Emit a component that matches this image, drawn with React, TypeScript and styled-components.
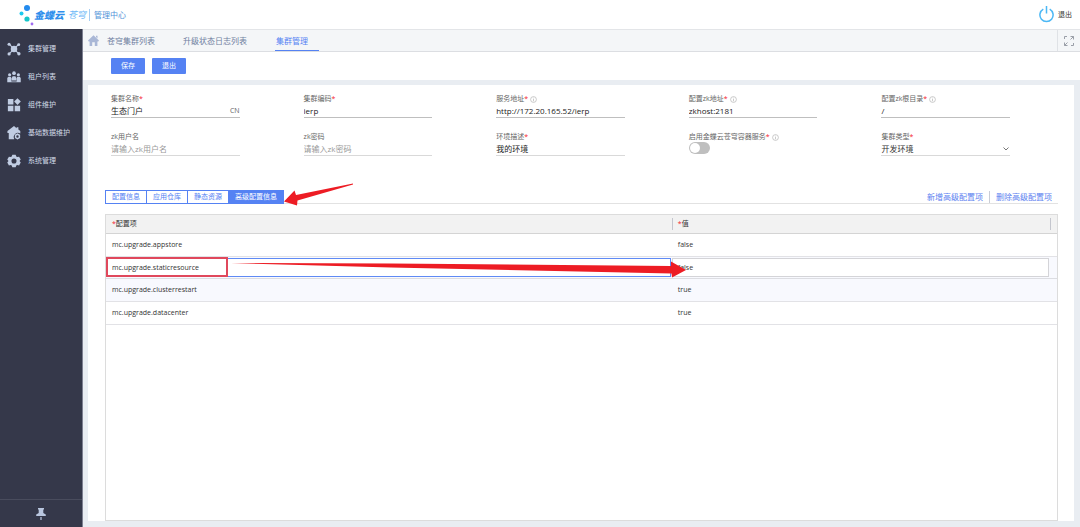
import React from "react";
import styled, { createGlobalStyle } from "styled-components";

const GlobalStyle = createGlobalStyle`
  *, *::before, *::after { box-sizing: border-box; }
  body { margin: 0; background: #e9edf2; }
  body, button, input, select {
    font-family: "Open Sans", "Noto Sans CJK SC", sans-serif;
    font-size: 8px;
    line-height: 12px;
  }
  button, input, select { margin: 0; padding: 0; border: 0; background: none; color: inherit; outline: none; }
  a { color: inherit; text-decoration: none; }
`;

const Page = styled.div`
  display: flex;
  flex-direction: column;
  min-height: 100vh;
  color: #333;
`;

const Header = styled.header`
  display: flex;
  align-items: center;
  height: 29px;
  padding: 0 8px 0 18px;
  background: #fff;
`;

const Brand = styled.div`
  display: flex;
  align-items: center;
  flex: 1;
`;

const BrandName = styled.span`
  font-size: 10px;
  font-weight: 900;
  font-style: italic;
  color: #2f8fec;
`;

const BrandSub = styled.span`
  margin-left: 4px;
  font-size: 9px;
  font-style: italic;
  color: #6db8f7;
`;

const BrandArea = styled.span`
  margin-left: 3px;
  padding-left: 4px;
  border-left: 1px solid #a5cdf3;
  color: #4f92d8;
`;

const LogoutButton = styled.button`
  display: flex;
  align-items: center;
  gap: 4px;
  font-size: 7px;
`;

const Body = styled.div`
  display: flex;
  flex: 1;
`;

const Sidebar = styled.aside`
  display: flex;
  flex-direction: column;
  flex: none;
  width: 83px;
  background: #35384a;
  color: #d3dbe8;
  border-right: 1px solid #7d8091;
`;

const SideNav = styled.nav`
  display: flex;
  flex-direction: column;
  flex: 1;
  padding-top: 6px;
`;

const SideLink = styled.a`
  display: flex;
  align-items: center;
  gap: 7px;
  height: 28px;
  padding-left: 7px;
  font-size: 7px;
  svg { color: #c0cce2; }
`;

const PinButton = styled.button`
  display: flex;
  align-items: center;
  justify-content: center;
  height: 28px;
  border-top: 1px solid #494c5d;
  color: #b9c6df;
`;

const Main = styled.main`
  display: flex;
  flex-direction: column;
  flex: 1;
  min-width: 0;
`;

const TabBar = styled.div`
  display: flex;
  align-items: stretch;
  height: 23px;
  padding-left: 5px;
  background: #f4f6f8;
  border-top: 1px solid #e3e5e8;
  border-bottom: 1px solid #dcdee2;
  color: #6f80a0;
`;

const HomeLink = styled.a`
  display: flex;
  align-items: center;
  margin-right: 8px;
  color: #a9b7d6;
`;

const PageTab = styled.a<{ $active?: boolean }>`
  display: flex;
  align-items: center;
  margin-right: 27px;
  padding-top: 2px;
  padding-right: ${(p) => (p.$active ? 11 : 1)}px;
  padding-left: ${(p) => (p.$active ? 1 : 0)}px;
  border-bottom: 1px solid ${(p) => (p.$active ? "#5582f3" : "transparent")};
  color: ${(p) => (p.$active ? "#5582f3" : "inherit")};
`;

const ExpandButton = styled.button`
  display: flex;
  align-items: center;
  justify-content: center;
  width: 23px;
  margin-left: auto;
  border-left: 1px solid #dfe2e6;
  color: #9a9fa8;
`;

const Toolbar = styled.div`
  display: flex;
  gap: 7px;
  padding: 6px 28px;
  background: #fff;
`;

const PrimaryButton = styled.button`
  width: 34px;
  height: 16px;
  background: #5582f3;
  border-radius: 1px;
  color: #fff;
  font-size: 7px;
`;

const Card = styled.section`
  display: flex;
  flex-direction: column;
  flex: 1;
  margin: 5px 6px 6px 5px;
  background: #fff;
`;

const FieldGrid = styled.form`
  display: grid;
  grid-template-columns: repeat(5, 1fr);
  row-gap: 13px;
  padding: 9px 0 0 23px;
`;

const Field = styled.div`
  margin-right: 64px;
`;

const FieldLabel = styled.label`
  display: flex;
  align-items: center;
  height: 10px;
  font-size: 7px;
  line-height: 10px;
  color: #666;
  white-space: nowrap;
  svg { margin-left: 2px; color: #b5b5b5; }
`;

const Star = styled.span`
  color: #f5222d;
`;

const Control = styled.div<{ $strong?: boolean }>`
  display: flex;
  align-items: center;
  height: 14px;
  margin-bottom: 1px;
  border-bottom: 1px solid ${(p) => (p.$strong ? "#bfbfbf" : "#d9d9d9")};
  color: #666;
  font-size: 7px;
`;

const TextInput = styled.input`
  flex: 1;
  width: 100%;
  min-width: 0;
  color: #222;
  &::placeholder { color: #999; opacity: 1; }
`;

const SelectBox = styled.select`
  flex: 1;
  appearance: none;
  color: #333;
`;

const Switch = styled.input`
  display: flex;
  align-items: center;
  appearance: none;
  width: 21px;
  height: 12px;
  border-radius: 6px;
  background: #bfbfbf;
  &::before {
    content: "";
    width: 10px;
    height: 10px;
    margin-left: 1px;
    border-radius: 50%;
    background: #fff;
  }
`;

const ConfigBar = styled.div`
  display: flex;
  align-items: flex-end;
  justify-content: space-between;
  margin: 33px 16px 0 17px;
  border-bottom: 1px solid #e2e2e2;
`;

const Segments = styled.div`
  display: flex;
  margin-bottom: -1px;
  border: 1px solid #5582f3;
`;

const Segment = styled.button<{ $active?: boolean }>`
  height: 12px;
  padding: 0 6px;
  background: ${(p) => (p.$active ? "#5582f3" : "#fff")};
  color: ${(p) => (p.$active ? "#fff" : "#5582f3")};
  font-size: 7px;
  line-height: 12px;
  & + & { border-left: 1px solid #5582f3; }
`;

const Actions = styled.div`
  display: flex;
  color: #5c7ff0;
`;

const Action = styled.button`
  padding: 0 6px;
  & + & { border-left: 1px solid #c9cdd6; }
`;

const TableFrame = styled.div`
  position: relative;
  flex: 1;
  margin: 10px 16px 0 17px;
  border: 1px solid #dcdcdc;
`;

const Table = styled.table`
  width: 100%;
  border-collapse: separate;
  border-spacing: 0;
  table-layout: fixed;
  font-size: 7px;
  line-height: 10px;
`;

const HeadCell = styled.th<{ $width?: string }>`
  width: ${(p) => p.$width ?? "auto"};
  height: 19px;
  padding: 0 6px 0 0;
  background: #f2f2f2;
  border-bottom: 1px solid #d4d4d4;
  font-weight: 400;
  text-align: left;
`;

const HeadInner = styled.div<{ $rule?: boolean }>`
  display: flex;
  align-items: center;
  height: 12px;
  padding-left: 5px;
  border-left: 1px solid ${(p) => (p.$rule ? "#c4c6ce" : "transparent")};
  border-right: 1px solid ${(p) => (p.$rule ? "#c4c6ce" : "transparent")};
`;

const Row = styled.tr<{ $tint?: boolean }>`
  background: ${(p) => (p.$tint ? "#f8f9fe" : "#fff")};
`;

const Cell = styled.td`
  height: 23px;
  padding: 0 0 0 6px;
  border-bottom: 1px solid #e2e2e6;
`;

const EditCell = styled.td<{ $last?: boolean }>`
  height: 22px;
  padding: 0 ${(p) => (p.$last ? 8 : 1)}px 0 0;
  border-bottom: 1px solid #dcdde2;
`;

const CellInput = styled.input<{ $focus?: boolean }>`
  display: block;
  width: 100%;
  height: 19px;
  padding-left: 5px;
  background: #fff;
  border: 1px solid ${(p) => (p.$focus ? "#5f8af5" : "#d4d4d8")};
  font-size: 7px;
  line-height: 10px;
`;

const Highlight = styled.div`
  position: absolute;
  top: 42px;
  left: 0;
  width: 122px;
  height: 20px;
  border: 2px solid #e0485c;
  pointer-events: none;
`;

const Arrows = styled.svg`
  position: absolute;
  top: -32px;
  left: 0;
  pointer-events: none;
`;

const InfoIcon = () => (
  <svg width="7" height="7" viewBox="0 0 14 14" fill="none" stroke="currentColor" strokeWidth="1.4">
    <circle cx="7" cy="7" r="5.8" />
    <path d="M7 6v4.5M7 3.4v1.4" />
  </svg>
);

const icons: Record<string, React.ReactNode> = {
  cluster: (
    <>
      <path d="M3 3l10 10M13 3L3 13" stroke="currentColor" strokeWidth="1.3" />
      <circle cx="8" cy="8" r="3.7" />
      <circle cx="2.4" cy="2.6" r="1.8" />
      <circle cx="13.4" cy="3" r="1.7" />
      <circle cx="2.4" cy="13.6" r="1.8" />
      <circle cx="13.6" cy="13.4" r="1.9" />
    </>
  ),
  tenants: (
    <>
      <circle cx="3" cy="5.4" r="1.8" />
      <circle cx="8" cy="3.6" r="2.1" />
      <circle cx="13" cy="5.4" r="1.8" />
      <path d="M5.4 12V9l1-2h3.2l1 2v3zM.3 14V9.2l1.2-1.5h2.7L5 9v4h6V9l.8-1.3h2.7l1.2 1.5V14z" />
    </>
  ),
  parts: (
    <>
      <path d="M1 1h6.3v6.3H1zM1 8.8h6.3V15H1zM8.8 8.8H15V15H8.8z" />
      <path d="M12 .3l3.8 3.8L12 7.9 8.2 4.1z" />
    </>
  ),
  house: (
    <>
      <path d="M8 0L.5 5.8V8H2v7h6.4a4.8 4.8 0 0 1 6.800-6.400V5.800L13 4.100V1.500h-2v1z" />
      <path
        fillRule="evenodd"
        d="M12 8.400l3 1.700v3.600l-3 1.800-3-1.800v-3.600zm0 2.200a1.400 1.400 0 1 0 0 2.800 1.400 1.400 0 0 0 0-2.800z"
      />
    </>
  ),
  gear: (
    <path
      fillRule="evenodd"
      d="M6.100.800h3.800l.700 2 1.100.600 2.100-.400 1.900 3.300L14.300 8l1.400 1.700-1.900 3.300-2.100-.400-1.100.600-.700 2H6.100l-.700-2-1.100-.600-2.100.400-1.900-3.300L1.700 8 .300 6.300 2.200 3l2.100.400 1.100-.600zM8 5.100a2.900 2.900 0 1 0 0 5.800 2.900 2.900 0 0 0 0-5.800z"
    />
  ),
};

const menu = [
  { icon: "cluster", text: "集群管理" },
  { icon: "tenants", text: "租户列表" },
  { icon: "parts", text: "组件维护" },
  { icon: "house", text: "基础数据维护" },
  { icon: "gear", text: "系统管理" },
];

type FieldSpec = {
  id: string;
  label: string;
  required?: boolean;
  info?: boolean;
  value?: string;
  placeholder?: string;
  suffix?: string;
  kind?: "switch" | "select";
  strong?: boolean;
};

const fields: FieldSpec[] = [
  { id: "name", label: "集群名称", required: true, value: "生态门户", suffix: "CN", strong: true },
  { id: "code", label: "集群编码", required: true, value: "ierp", strong: true },
  { id: "url", label: "服务地址", required: true, info: true, value: "http://172.20.165.52/ierp", strong: true },
  { id: "zkhost", label: "配置zk地址", required: true, info: true, value: "zkhost:2181", strong: true },
  { id: "zkroot", label: "配置zk根目录", required: true, info: true, value: "/", strong: true },
  { id: "zkuser", label: "zk用户名", placeholder: "请输入zk用户名" },
  { id: "zkpass", label: "zk密码", placeholder: "请输入zk密码" },
  { id: "desc", label: "环境描述", required: true, value: "我的环境" },
  { id: "container", label: "启用金蝶云苍穹容器服务", required: true, info: true, kind: "switch" },
  { id: "type", label: "集群类型", required: true, value: "开发环境", kind: "select" },
];

const rows = [
  { key: "mc.upgrade.appstore", value: "false" },
  { key: "mc.upgrade.staticresource", value: "false", editing: true },
  { key: "mc.upgrade.clusterrestart", value: "true", tint: true },
  { key: "mc.upgrade.datacenter", value: "true" },
];

function FormField({ spec }: { spec: FieldSpec }) {
  return (
    <Field>
      <FieldLabel htmlFor={spec.id}>
        {spec.label}
        {spec.required && <Star>*</Star>}
        {spec.info && <InfoIcon />}
      </FieldLabel>
      {spec.kind === "switch" ? (
        <Switch id={spec.id} type="checkbox" />
      ) : (
        <Control $strong={spec.strong}>
          {spec.kind === "select" ? (
            <>
              <SelectBox id={spec.id} defaultValue={spec.value}>
                <option>{spec.value}</option>
              </SelectBox>
              <svg width="8" height="6" viewBox="0 0 8 6" fill="none" stroke="#777">
                <path d="M1.5 1.5L4 4l2.5-2.5" />
              </svg>
            </>
          ) : (
            <TextInput id={spec.id} defaultValue={spec.value} placeholder={spec.placeholder} />
          )}
          {spec.suffix}
        </Control>
      )}
    </Field>
  );
}

export default function App() {
  return (
    <Page>
      <GlobalStyle />
      <Header>
        <Brand>
          <svg width="16" height="24" viewBox="0 0 16 24">
            <circle cx="9" cy="5" r="3" fill="#238bee" />
            <circle cx="3.5" cy="10.5" r="2" fill="#1cc9ee" />
            <circle cx="9" cy="16" r="2.6" fill="#16c6c9" />
            <circle cx="14" cy="21" r="1.4" fill="#a06cf0" />
          </svg>
          <BrandName>金蝶云</BrandName>
          <BrandSub>苍穹</BrandSub>
          <BrandArea>管理中心</BrandArea>
        </Brand>
        <LogoutButton type="button">
          <svg width="15" height="17" viewBox="0 0 15 17" fill="none" stroke="#4cb8f5" strokeWidth="1.5">
            <path d="M4.300 3.200a6.600 6.600 0 1 0 6.400 0M7.500 0v7.500" />
          </svg>
          退出
        </LogoutButton>
      </Header>
      <Body>
        <Sidebar>
          <SideNav>
            {menu.map((m) => (
              <SideLink href="#" key={m.text}>
                <svg width="14" height="14" viewBox="0 0 16 16" fill="currentColor">
                  {icons[m.icon]}
                </svg>
                {m.text}
              </SideLink>
            ))}
          </SideNav>
          <PinButton type="button" aria-label="固定">
            <svg width="10" height="12" viewBox="0 0 10 12" fill="currentColor">
              <path d="M2 0h6v1.500H7.300V5l2.500 1.500V8H.200V6.500L2.700 5V1.500H2zM4.400 9h1.200v3H4.400z" />
            </svg>
          </PinButton>
        </Sidebar>
        <Main>
          <TabBar>
            <HomeLink href="#" aria-label="首页">
              <svg width="11" height="11" viewBox="0 0 11 11" fill="currentColor">
                <path d="M5.500.300L11 5.600 10 6.700l-.600-.500V11H6.800V7.300H4.200V11H1.600V6.200l-.600.500-1-1.100zM8 .800h1.500v2.600L8 2z" />
              </svg>
            </HomeLink>
            <PageTab href="#">苍穹集群列表</PageTab>
            <PageTab href="#">升级状态日志列表</PageTab>
            <PageTab href="#" $active>集群管理</PageTab>
            <ExpandButton type="button" aria-label="全屏">
              <svg width="10" height="10" viewBox="0 0 10 10" fill="none" stroke="currentColor">
                <path d="M.5 3V.5H3M6.500.5h3V3.500M9.500 7v2.500H7M3.500 9.500h-3v-3M9.500.5L6.500 3.500M.5 9.500l3-3" />
              </svg>
            </ExpandButton>
          </TabBar>
          <Toolbar>
            <PrimaryButton type="button">保存</PrimaryButton>
            <PrimaryButton type="button">退出</PrimaryButton>
          </Toolbar>
          <Card>
            <FieldGrid>
              {fields.map((f) => (
                <FormField key={f.id} spec={f} />
              ))}
            </FieldGrid>
            <ConfigBar>
              <Segments>
                <Segment type="button">配置信息</Segment>
                <Segment type="button">应用仓库</Segment>
                <Segment type="button">静态资源</Segment>
                <Segment type="button" $active>高级配置信息</Segment>
              </Segments>
              <Actions>
                <Action type="button">新增高级配置项</Action>
                <Action type="button">删除高级配置项</Action>
              </Actions>
            </ConfigBar>
            <TableFrame>
              <Table>
                <thead>
                  <tr>
                    <HeadCell $width="59.5%">
                      <HeadInner><Star>*</Star>配置项</HeadInner>
                    </HeadCell>
                    <HeadCell>
                      <HeadInner $rule><Star>*</Star>值</HeadInner>
                    </HeadCell>
                  </tr>
                </thead>
                <tbody>
                  {rows.map((r) =>
                    r.editing ? (
                      <Row key={r.key} $tint>
                        <EditCell>
                          <CellInput $focus aria-label="配置项" defaultValue={r.key} />
                        </EditCell>
                        <EditCell $last>
                          <CellInput aria-label="值" defaultValue={r.value} />
                        </EditCell>
                      </Row>
                    ) : (
                      <Row key={r.key} $tint={r.tint}>
                        <Cell>{r.key}</Cell>
                        <Cell>{r.value}</Cell>
                      </Row>
                    )
                  )}
                </tbody>
              </Table>
              <Highlight />
              <Arrows width="600" height="100" viewBox="106 183 600 100" fill="#ed1c24">
                <path d="M284 201.500L294.500 190.500 296 195 353 183.500 353 184.500 297.500 200.500 297 205.500z" />
                <path d="M231 263L391 263.500 671 266V261.500L686 270 672 277.500 671.500 273.500 391 267.500z" />
              </Arrows>
            </TableFrame>
          </Card>
        </Main>
      </Body>
    </Page>
  );
}
